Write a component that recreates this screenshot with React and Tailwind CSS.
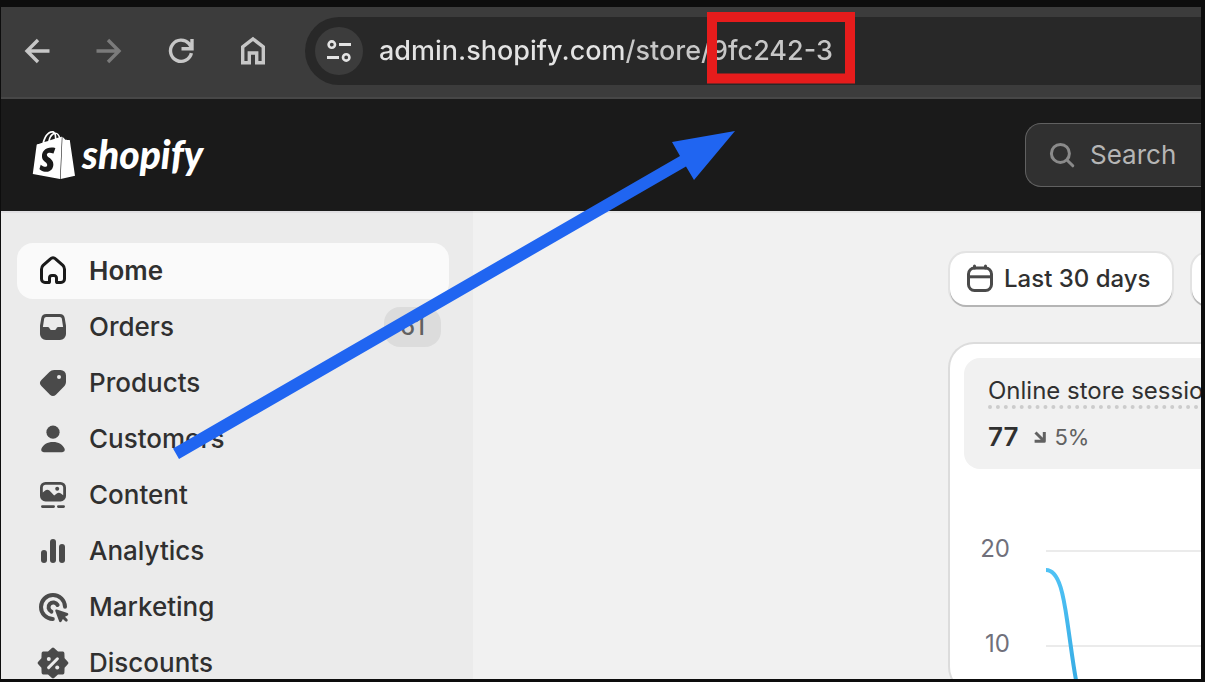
import { SiShopify } from 'react-icons/si';

const navItems = [
  { label: 'Home', icon: HomeIcon, active: true },
  { label: 'Orders', icon: OrdersIcon, badge: '61' },
  { label: 'Products', icon: ProductsIcon },
  { label: 'Customers', icon: CustomersIcon },
  { label: 'Content', icon: ContentIcon },
  { label: 'Analytics', icon: AnalyticsIcon },
  { label: 'Marketing', icon: MarketingIcon },
  { label: 'Discounts', icon: DiscountsIcon },
];

function Icon({ children, className = 'size-10' }) {
  return (
    <svg viewBox="0 0 20 20" fill="currentColor" className={`shrink-0 ${className}`} aria-hidden="true">
      {children}
    </svg>
  );
}

function HomeIcon() {
  return (
    <Icon>
      <path
        d="M4.25 9.1c0-.72.28-1.42.8-1.93L8.75 3.9a1.75 1.75 0 0 1 2.5 0l3.7 3.27c.52.51.8 1.2.8 1.93v4.9a1.75 1.75 0 0 1-1.75 1.75h-1.7a.55.55 0 0 1-.55-.55v-1.7a1.25 1.25 0 0 0-1.25-1.25h-1a1.25 1.25 0 0 0-1.25 1.25v1.7a.55.55 0 0 1-.55.55H6A1.75 1.75 0 0 1 4.25 14z"
        fill="none"
        stroke="currentColor"
        strokeWidth="1.5"
      />
    </Icon>
  );
}

function OrdersIcon() {
  return (
    <Icon>
      <path
        fillRule="evenodd"
        d="M6.6 3.5h6.8a2.5 2.5 0 0 1 2.45 2.05l.6 3.4c.03.2.05.4.05.6V13.5a3 3 0 0 1-3 3h-7a3 3 0 0 1-3-3V9.55c0-.2.02-.4.05-.6l.6-3.4A2.5 2.5 0 0 1 6.6 3.5zm0 1.45a1 1 0 0 0-1 .85L4.95 10h2.3c.55 0 .85.3 1.05.7.25.5.6.75 1.2.75h1c.6 0 .95-.25 1.2-.75.2-.4.5-.7 1.05-.7h2.3l-.65-4.2a1 1 0 0 0-1-.85z"
      />
    </Icon>
  );
}

function ProductsIcon() {
  return (
    <Icon>
      <path
        fillRule="evenodd"
        d="M10.6 3.5h3.15a2.75 2.75 0 0 1 2.75 2.75V9.4c0 .9-.36 1.77-1 2.4l-4.05 4.02a2.1 2.1 0 0 1-2.96 0l-4.3-4.3a2.1 2.1 0 0 1 0-2.96L8.2 4.5c.64-.64 1.5-1 2.4-1zM13 8a1 1 0 1 0 0-2 1 1 0 0 0 0 2z"
      />
    </Icon>
  );
}

function CustomersIcon() {
  return (
    <Icon>
      <circle cx="10" cy="6.6" r="3.3" />
      <path d="M4.2 14.9c.9-2.2 3-3.4 5.8-3.4s4.9 1.2 5.8 3.4c.35.9-.3 1.7-1.2 1.7H5.4c-.9 0-1.55-.8-1.2-1.7z" />
    </Icon>
  );
}

function ContentIcon() {
  return (
    <Icon>
      <path
        fillRule="evenodd"
        d="M6.25 3.5h7.5a2.75 2.75 0 0 1 2.75 2.75v4.2a2.75 2.75 0 0 1-2.75 2.75h-7.5a2.75 2.75 0 0 1-2.75-2.75v-4.2A2.75 2.75 0 0 1 6.25 3.5zm0 1.4c-.75 0-1.35.6-1.35 1.35v2.5l1.2-1c.65-.55 1.5-.5 2.1.05l2.4 2.5 1.3-1.1c.6-.5 1.45-.5 2.05 0l1.15.9V6.25c0-.75-.6-1.35-1.35-1.35z"
      />
      <circle cx="12.1" cy="6.9" r="1" />
      <path d="M4.7 15.8h5.6M12.7 15.8h2.6" stroke="currentColor" strokeWidth="1.4" strokeLinecap="round" />
    </Icon>
  );
}

function AnalyticsIcon() {
  return (
    <Icon>
      <rect x="4" y="9.5" width="3" height="6.5" rx="1.5" />
      <rect x="8.5" y="4" width="3" height="12" rx="1.5" />
      <rect x="13" y="6.5" width="3" height="9.5" rx="1.5" />
    </Icon>
  );
}

function MarketingIcon() {
  return (
    <Icon>
      <g fill="none" stroke="currentColor" strokeWidth="2" strokeLinecap="round">
        <path d="M16 9.9A6 6 0 1 0 9.9 16" />
        <path d="M12.3 9A2.4 2.4 0 1 0 9.2 12.3" />
      </g>
      <path d="M11.9 11.3l5.3 1.7c.6.2.6.95.1 1.2l-1.3.7 1.2 1.2a.75.75 0 0 1-1.05 1.05l-1.2-1.2-.7 1.3c-.3.5-1.05.5-1.2-.1l-1.9-5.1c-.15-.5.25-.9.75-.75z" />
    </Icon>
  );
}

function DiscountsIcon() {
  return (
    <Icon>
      <path
        d="M10 3.1L12.1 5L14.9 5.1L15 7.9L16.9 10L15 12.1L14.9 14.9L12.1 15L10 16.9L7.9 15L5.1 14.9L5 12.1L3.1 10L5 7.9L5.1 5.1L7.9 5Z"
        stroke="currentColor"
        strokeWidth="1.6"
        strokeLinejoin="round"
      />
      <g className="fill-[#ebebeb] stroke-[#ebebeb]">
        <path d="M7.8 12.3l4.4-4.4" strokeWidth="1.5" strokeLinecap="round" />
        <circle cx="7.9" cy="8" r="1" stroke="none" />
        <circle cx="12.1" cy="12.2" r="1" stroke="none" />
      </g>
    </Icon>
  );
}

function BrowserButton({ label, dim, children }) {
  return (
    <button aria-label={label} className={dim ? 'text-[#7b7b7b]' : 'text-[#c7c7c7]'}>
      <svg viewBox="0 0 32 32" className="size-8" fill="none" stroke="currentColor" strokeWidth="3.4" aria-hidden="true">
        {children}
      </svg>
    </button>
  );
}

function BrowserBar() {
  return (
    <div className="flex items-center gap-10 border-b-2 border-[#474747] bg-[#3c3c3c] pt-[10px] pb-3 pl-5">
      <BrowserButton label="Back">
        <path d="M28.5 16H6M17 5L6 16l11 11" />
      </BrowserButton>
      <BrowserButton label="Forward" dim>
        <path d="M3.5 16H26M15 5l11 11-11 11" />
      </BrowserButton>
      <BrowserButton label="Reload">
        <path d="M26.4 18.2A10.6 10.6 0 1 1 24 8.7l2.6 3.6M27 4v9.8H16.5" />
      </BrowserButton>
      <BrowserButton label="Home page">
        <path d="M5.7 27.8V11.9L16 4l10.3 7.9v15.9h-6.6V18h-7.4v9.8z" />
      </BrowserButton>

      <div className="-ml-1 flex h-[68px] flex-1 items-center gap-4 rounded-l-full bg-[#282828] pl-[10px]">
        <button aria-label="Site information" className="flex size-12 shrink-0 items-center justify-center rounded-full bg-[#3c3c3c] text-[#e3e3e3]">
          <svg viewBox="0 0 24 24" className="size-6" fill="none" stroke="currentColor" strokeWidth="3" aria-hidden="true">
            <circle cx="4.8" cy="5.6" r="3.2" strokeWidth="2.6" />
            <path d="M12 5.6h12M0 18.4h12" />
            <circle cx="19.2" cy="18.4" r="3.2" strokeWidth="2.6" />
          </svg>
        </button>
        <input
          aria-label="Address"
          defaultValue="admin.shopify.com/store/9fc242-3"
          className="min-w-0 flex-1 bg-linear-to-r from-[#e3e3e3] from-[247px] to-[#c7c7c7] to-[247px] bg-clip-text text-[27px] font-medium text-transparent outline-none"
        />
      </div>
    </div>
  );
}

function AdminHeader() {
  return (
    <header className="flex h-28 items-center justify-between bg-[#1a1a1a] pl-[29px]">
      <a href="#" aria-label="shopify" className="flex items-center gap-1 text-white">
        <SiShopify className="size-12" />
        <span className="pb-0.5 font-[Lato,sans-serif] text-[39px] leading-10 font-black italic">shopify</span>
      </a>
      <label className="flex h-16 w-[176px] items-center gap-2 rounded-l-2xl border border-r-0 border-[#616161] bg-[#303030] pl-4 text-[#8a8a8a]">
        <Icon>
          <g fill="none" stroke="currentColor" strokeWidth="1.5" strokeLinecap="round">
            <circle cx="9.2" cy="9.2" r="4.5" />
            <path d="M12.6 12.6l2.8 2.8" />
          </g>
        </Icon>
        <input
          type="search"
          placeholder="Search"
          aria-label="Search"
          className="min-w-0 flex-1 pb-0.5 text-[26px] outline-none placeholder:text-[#b5b5b5]"
        />
      </label>
    </header>
  );
}

function Sidebar() {
  return (
    <nav className="w-[472px] shrink-0 border-t-2 border-[#e0dfe2] bg-[#ebebeb] pt-[30px] pr-6 pl-4">
      {navItems.map(({ label, icon: ItemIcon, active, badge }) => (
        <a
          key={label}
          href="#"
          className={`flex h-14 items-center gap-4 rounded-2xl pr-2 pl-4 text-[26px] text-[#303030] ${
            active ? 'bg-[#fafafa] font-semibold' : 'font-medium'
          }`}
        >
          <span className={active ? 'text-[#1a1a1a]' : 'text-[#4a4a4a]'}>
            <ItemIcon />
          </span>
          <span className="pb-0.5">{label}</span>
          {badge && (
            <span className="ml-auto rounded-2xl bg-[#dcdcdc] px-4 text-2xl leading-10 text-[#616161]">{badge}</span>
          )}
        </a>
      ))}
    </nav>
  );
}

function SessionsCard() {
  return (
    <section className="mt-[39px] rounded-l-3xl bg-white pt-[14px] pl-[14px] shadow-[0_0_0_2px_#dcdcdc]">
      <div className="overflow-hidden rounded-l-2xl bg-[#f1f1f1] pt-[18px] pb-3 pl-6 whitespace-nowrap">
        <h2 className="w-max border-b-4 border-dotted border-[#cccccc] text-2xl leading-[29px] text-[#303030]">
          Online store sessions
        </h2>
        <div className="mt-2 flex items-center">
          <span className="text-[26px] leading-10 font-semibold text-[#303030]">77</span>
          <svg viewBox="0 0 12 12" className="mr-2 ml-4 size-3 text-[#616161]" fill="none" stroke="currentColor" strokeWidth="3" aria-hidden="true">
            <path d="M1.5 1.5l8 8M.6 10.3h9.7V1" strokeLinejoin="round" />
          </svg>
          <span className="text-[22px] text-[#616161]">5%</span>
        </div>
      </div>

      <div className="mt-8 flex">
        <div className="w-[46px] text-right text-2xl text-[#70707b]">
          <div className="leading-[95px]">20</div>
          <div className="leading-[95px]">10</div>
        </div>
        <svg className="ml-9 h-[190px] flex-1" fill="none" aria-hidden="true">
          <path d="M0 50h2000M0 145h2000" stroke="#ebebeb" strokeWidth="2" />
          <path d="M0 69C14 69 18 98 21.5 122S27 163 30 179L32 190" stroke="url(#sessions)" strokeWidth="4" />
          <defs>
            <linearGradient id="sessions" x1="0" y1="69" x2="0" y2="190" gradientUnits="userSpaceOnUse">
              <stop stopColor="#4fc2f5" />
              <stop offset="1" stopColor="#35aae2" />
            </linearGradient>
          </defs>
        </svg>
      </div>
    </section>
  );
}

function Annotations() {
  return (
    <svg className="pointer-events-none absolute top-0 left-0 h-full w-full" aria-hidden="true">
      <rect x="712" y="17" width="138" height="61.5" fill="none" stroke="#e61c1c" strokeWidth="10" />
      <path d="M173 448.5L680 156l-8-14 63-11-41 49-8-13.5L179 459z" fill="#2065f1" />
    </svg>
  );
}

export default function App() {
  return (
    <div className="relative flex h-screen flex-col overflow-hidden bg-[#0d0d0d] pt-[7px] pr-1 pb-[3px] pl-px font-[Inter,sans-serif]">
      <BrowserBar />
      <AdminHeader />
      <div className="flex min-h-0 flex-1 overflow-hidden">
        <Sidebar />
        <main className="min-w-0 flex-1 overflow-hidden border-t-2 border-[#e6e6e6] bg-[#f1f1f1] pt-10">
          <div className="ml-auto w-[251px]">
            <div className="flex gap-5">
              <button className="flex h-[52px] shrink-0 items-center gap-1 rounded-2xl bg-white pr-[22px] pl-[10px] text-2xl font-medium text-[#303030] shadow-[0_2px_0_0_#b5b5b5,0_0_0_2px_#e3e3e3]">
                <Icon>
                  <g fill="none" stroke="#4a4a4a" strokeWidth="1.5">
                    <rect x="4.25" y="4.5" width="11.5" height="11.25" rx="3" />
                    <path d="M4.25 8.9h11.5" />
                    <path d="M7.25 3.5v1M12.75 3.5v1" strokeLinecap="round" />
                  </g>
                </Icon>
                Last 30 days
              </button>
              <button aria-label="Compare" className="h-[52px] w-40 shrink-0 rounded-2xl bg-white shadow-[0_2px_0_0_#b5b5b5,0_0_0_2px_#e3e3e3]" />
            </div>
            <SessionsCard />
          </div>
        </main>
      </div>
      <Annotations />
    </div>
  );
}
